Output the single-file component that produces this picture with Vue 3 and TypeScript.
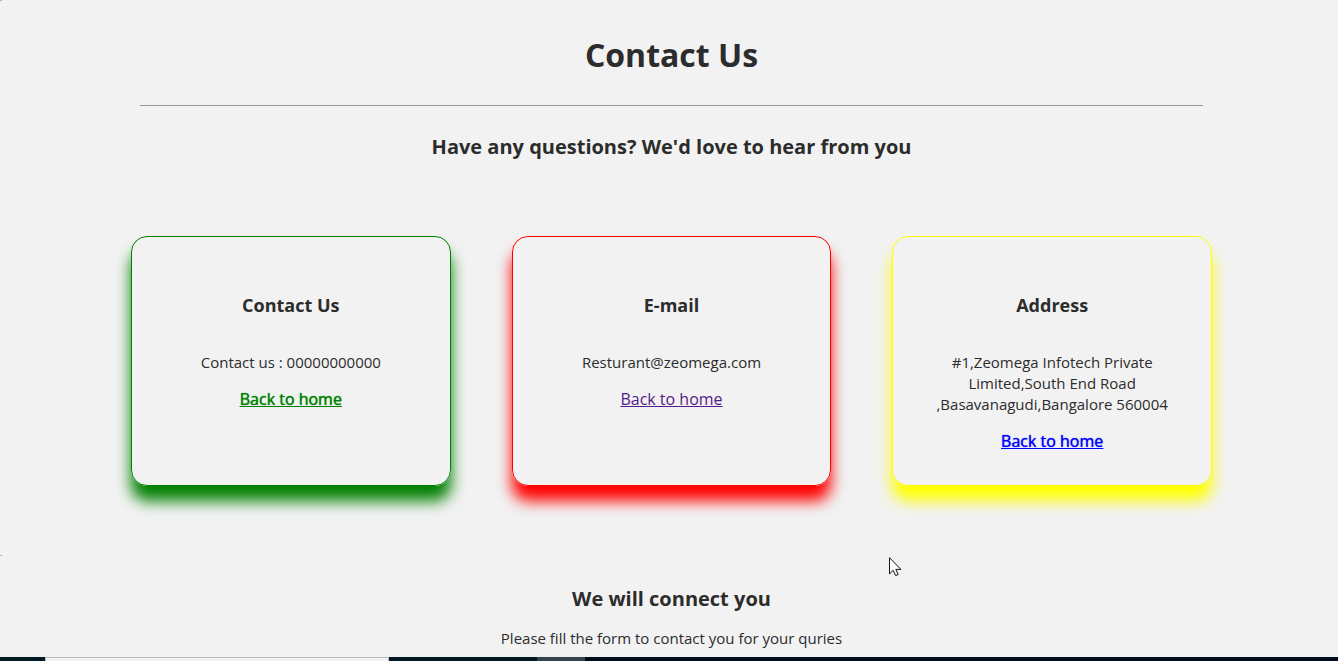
<script setup lang="ts">
interface ContactCard {
  title: string
  lines: string[]
  tone: 'green' | 'red' | 'yellow'
}

const cards: ContactCard[] = [
  { title: 'Contact Us', lines: ['Contact us : 00000000000'], tone: 'green' },
  { title: 'E-mail', lines: ['Resturant@zeomega.com'], tone: 'red' },
  {
    title: 'Address',
    lines: ['#1,Zeomega Infotech Private', 'Limited,South End Road', ',Basavanagudi,Bangalore 560004'],
    tone: 'yellow',
  },
]
</script>

<template>
  <div class="page">
    <main class="content">
      <header class="intro">
        <h1>Contact Us</h1>
        <hr class="rule" />
        <h2>Have any questions? We'd love to hear from you</h2>
      </header>

      <section class="cards">
        <article v-for="card in cards" :key="card.title" class="card" :class="card.tone">
          <h3>{{ card.title }}</h3>
          <p>
            <template v-for="(line, i) in card.lines" :key="line"><br v-if="i > 0" />{{ line }}</template>
          </p>
          <a href="#">Back to home</a>
        </article>
      </section>

      <section class="connect">
        <h2>We will connect you</h2>
        <p>Please fill the form to contact you for your quries</p>
      </section>
    </main>

    <svg class="cursor" width="13" height="20" viewBox="0 0 13 20" aria-hidden="true">
      <path d="M.5.7v16.2l3.7-3.6 2.4 5.3 2.6-1.1-2.4-5.1h5.1z" fill="#fff" stroke="#10101c" />
    </svg>

    <div class="taskbar" aria-hidden="true">
      <span class="start"></span>
      <span class="search"></span>
      <span class="apps"></span>
      <span class="active"></span>
      <span class="rest"></span>
    </div>
  </div>
</template>

<style>
body {
  margin: 0;
  background: #f2f2f2;
}
</style>

<style scoped>
.page {
  position: relative;
  min-height: 100vh;
  box-sizing: border-box;
  overflow: hidden;
  background: #f2f2f2;
  color: #2c2c2c;
  font-family: "Open Sans", sans-serif;
  font-size: 15px;
  line-height: 21px;
}

.page::before,
.page::after {
  content: "";
  position: absolute;
  left: 0;
  top: 0;
  width: 2px;
  height: 1px;
  background: #b4b4b4;
}

.page::after {
  top: 555px;
}

.content {
  padding-left: 5px;
  text-align: center;
}

h1,
h2,
h3,
p {
  margin: 0;
}

h1 {
  padding-top: 33px;
  font-size: 32px;
  line-height: 44px;
}

h2 {
  font-size: 20px;
  line-height: 28px;
}

h3 {
  font-size: 18px;
  line-height: 28px;
}

.rule {
  height: 0;
  margin: 28px 135px 27px;
  border: 0;
  border-top: 1px solid #999;
}

.cards {
  display: grid;
  grid-template-columns: repeat(3, 1fr);
  gap: 61px;
  margin: 75px 126px 0;
}

.card {
  box-sizing: border-box;
  min-height: 250px;
  padding: 54px 20px 32px;
  border: 1px solid;
  border-radius: 16px;
}

.card p {
  margin: 33px 0 16px;
}

.card a {
  font-size: 16px;
}

.green {
  border-color: green;
  box-shadow: 0 15px 15px green;
}

.green a {
  color: green;
  text-shadow: 0 0 1px green;
}

.red {
  border-color: red;
  box-shadow: 0 15px 15px red;
}

.red a {
  color: #551a8b;
}

.yellow {
  border-color: yellow;
  box-shadow: 0 15px 15px yellow;
}

.yellow a {
  color: #0000ff;
  text-shadow: 0 0 1px #0000ff;
}

.connect {
  padding: 99px 0 12px;
}

.connect p {
  margin-top: 15px;
}

.cursor {
  position: absolute;
  left: 889px;
  top: 557px;
}

.taskbar {
  position: absolute;
  left: 0;
  right: 0;
  bottom: 0;
  display: flex;
  height: 4px;
  background: #000c1c;
}

.start {
  width: 45px;
  background: #001a24;
}

.search {
  box-sizing: border-box;
  width: 344px;
  border: 1px solid #bbb;
  border-bottom: 0;
  background: #f2f2f2;
}

.apps {
  width: 148px;
  background: #001822;
}

.active {
  width: 48px;
  background: #33444c;
}

.rest {
  flex: 1;
  background: #000c1c;
}
</style>
